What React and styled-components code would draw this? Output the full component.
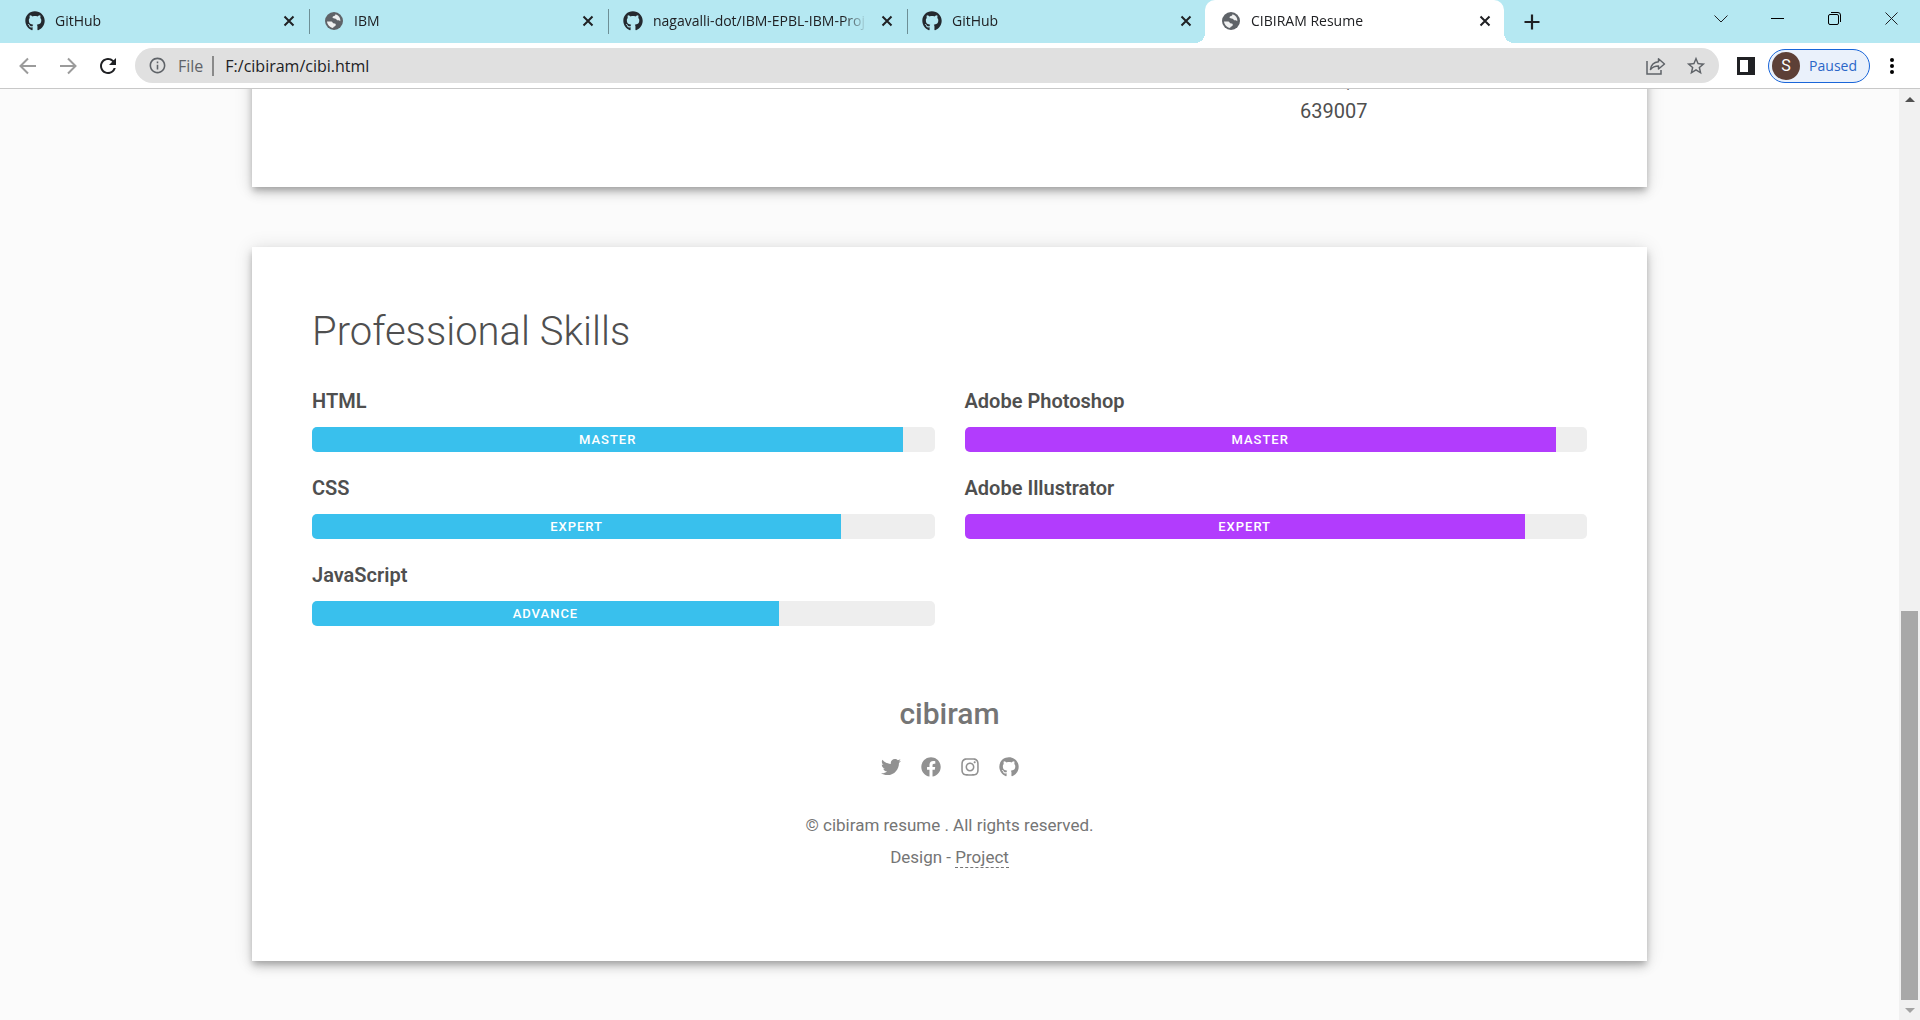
import React from 'react';
import styled, { createGlobalStyle, css } from 'styled-components';
import { FaGithub, FaTwitter, FaFacebook, FaInstagram } from 'react-icons/fa';
import { MdRefresh, MdStarBorder, MdInfoOutline } from 'react-icons/md';

const GlobalStyle = createGlobalStyle`
  *, *::before, *::after { box-sizing: border-box; }
  html, body, #root { height: 100%; }
  body { margin: 0; background: #fbfbfb; font-family: Roboto, sans-serif; }
  h1, h2, h3, p { margin: 0; }
  button { border: 0; padding: 0; background: none; color: inherit; font: inherit; }
`;

const ui = `'Open Sans', 'Noto Sans', sans-serif`;

const Window = styled.div`
  display: flex;
  flex-direction: column;
  height: 100vh;
  overflow: hidden;
`;

/* ---------- tab strip ---------- */

const TabStrip = styled.header`
  display: flex;
  flex: none;
  height: 43px;
  padding-left: 9px;
  background: #b5e8f2;
  color: #202124;
  font: 14px ${ui};
`;

const Tab = styled.div`
  position: relative;
  display: flex;
  align-items: center;
  flex: 0 1 299px;
  min-width: 0;
  gap: 10px;
  padding: 0 9px 2px 16px;

  ${(p) => p.$divided && css`
    &::before {
      content: '';
      position: absolute;
      left: 1px;
      top: 9px;
      width: 1px;
      height: 25px;
      background: #6d8f96;
    }
  `}

  ${(p) => p.$active && css`
    background: #fff;
    border-radius: 10px 10px 0 0;
    &::before, &::after {
      content: '';
      position: absolute;
      bottom: 0;
      width: 10px;
      height: 10px;
    }
    &::before {
      left: -10px;
      background: radial-gradient(circle at 0 0, transparent 10px, #fff 10px);
    }
    &::after {
      right: -10px;
      background: radial-gradient(circle at 100% 0, transparent 10px, #fff 10px);
    }
  `}
`;

const Favicon = styled.span`
  display: flex;
  flex: none;
  justify-content: center;
  width: 20px;
  font-size: 20px;
  color: ${(p) => (p.$muted ? '#5f6368' : '#24292f')};
`;

const TabTitle = styled.button`
  flex: 1;
  min-width: 0;
  overflow: hidden;
  white-space: nowrap;
  text-align: left;
  mask-image: linear-gradient(to right, #000 calc(100% - 24px), transparent);
`;

const IconButton = styled.button`
  display: flex;
  flex: none;
  align-items: center;
  justify-content: center;
  width: ${(p) => p.$w || 20}px;
  color: ${(p) => p.$color || '#202124'};
`;

const WindowControls = styled.div`
  display: flex;
  margin-left: auto;
  padding-bottom: 6px;
`;

/* ---------- toolbar ---------- */

const Toolbar = styled.div`
  display: flex;
  flex: none;
  align-items: center;
  height: 46px;
  padding: 0 13px 0 8px;
  background: #fff;
  border-bottom: 1px solid #c8c8c8;
`;

const Omnibox = styled.form`
  display: flex;
  flex: 1;
  align-items: center;
  min-width: 0;
  height: 35px;
  margin: 0 12px 0 7px;
  padding: 0 3px 0 13px;
  border-radius: 18px;
  background: #e0e0e0;
  color: #5f6368;
  font: 16px ${ui};
`;

const Scheme = styled.label`
  margin-left: 11px;
  padding-right: 9px;
  border-right: 2px solid #8a8a8a;
  line-height: 20px;
`;

const Address = styled.input`
  flex: 1;
  min-width: 0;
  padding: 0 0 0 11px;
  border: 0;
  outline: 0;
  background: none;
  color: #202124;
  font: inherit;
`;

const Profile = styled.button`
  display: flex;
  align-items: center;
  gap: 9px;
  height: 34px;
  margin: 0 7px;
  padding: 0 12px 0 3px;
  border: 1px solid #1a66d9;
  border-radius: 17px;
  background: #eaf1fb;
  color: #2a66c8;
  font: 14px ${ui};
`;

const Avatar = styled.span`
  width: 28px;
  border-radius: 50%;
  background: #5d4037;
  color: #fff;
  font: 16px/28px Roboto, sans-serif;
  text-align: center;
`;

/* ---------- page ---------- */

const Viewport = styled.div`
  display: flex;
  flex: 1;
  min-height: 0;
`;

const Page = styled.main`
  display: flex;
  flex: 1;
  flex-direction: column;
  justify-content: flex-end;
  align-items: center;
  gap: 60px;
  min-width: 0;
  padding: 0 20px 59px;
  overflow: hidden;
  background: #fbfbfb;
  color: #4f4f4f;
`;

const Card = styled.section`
  flex: none;
  width: 100%;
  max-width: 1395px;
  padding: 60px;
  background: #fff;
  box-shadow: 0 4px 6px -1px rgba(0, 0, 0, 0.2), 0 6px 10px rgba(0, 0, 0, 0.14),
    0 1px 18px rgba(0, 0, 0, 0.12);
`;

const AddressBlock = styled.address`
  width: 287px;
  margin-left: auto;
  font-style: normal;
  font-size: 20px;
  line-height: 31px;
`;

const SectionTitle = styled.h2`
  margin-bottom: 28px;
  font-size: 40px;
  font-weight: 300;
  line-height: 50px;
`;

const Columns = styled.div`
  display: grid;
  grid-template-columns: 1fr 1fr;
  gap: 30px;
`;

const SkillList = styled.div`
  display: flex;
  flex-direction: column;
  gap: 20px;
`;

const SkillName = styled.h3`
  margin-bottom: 10px;
  font-size: 20px;
  font-weight: 600;
  line-height: 32px;
`;

const Track = styled.div`
  height: 25px;
  overflow: hidden;
  border-radius: 5px;
  background: #eee;
`;

const Fill = styled.div`
  height: 100%;
  background: ${(p) => p.$color};
  color: #fff;
  font-size: 13px;
  font-weight: 500;
  letter-spacing: 1px;
  line-height: 25px;
  text-align: center;
`;

const Footer = styled.footer`
  display: flex;
  flex-direction: column;
  align-items: center;
  padding: 70px 0 28px;
  color: #757575;
  font-size: 17px;
  line-height: 32px;
`;

const Brand = styled.h2`
  font-size: 30px;
  font-weight: 500;
  line-height: 36px;
`;

const Socials = styled.nav`
  display: flex;
  gap: 20px;
  margin: 25px 0 32px;
`;

const SocialLink = styled.a`
  display: flex;
  color: #919191;
  svg { width: ${(p) => p.$w}px; height: 20px; }
`;

const ProjectLink = styled.a`
  border-bottom: 1px dashed #757575;
  color: inherit;
  text-decoration: none;
`;

/* ---------- scroll bar ---------- */

const ScrollBar = styled.div`
  display: flex;
  flex: none;
  flex-direction: column;
  width: 21px;
  background: #f1f1f1;
`;

const ScrollSpace = styled.div`
  flex: 502;
`;

const ScrollThumb = styled.div`
  flex: 389;
  margin: 0 2px;
  background: #a8a8a8;
`;

const ScrollButton = styled.button`
  display: flex;
  align-items: center;
  justify-content: center;
  height: 20px;
`;

/* ---------- drawings ---------- */

const Cross = () => (
  <svg width="12" height="12" viewBox="0 0 12 12" stroke="currentColor" strokeWidth="2">
    <path d="M1.5 1.5l9 9M10.5 1.5l-9 9" />
  </svg>
);

const Globe = () => (
  <svg width="18" height="18" viewBox="0 0 18 18">
    <circle cx="9" cy="9" r="9" fill="#5f6368" />
    <path
      d="M10.5 2.2c-.2 1-.5 1.600-1.500 1.700-.9.1-1.500.7-1.400 1.600.1.700.7.900 1.500.9 1 0 2 .2 2.400 1.100.3.700 1 .9 1.800.8.700-.1 1.200.2 2 .9C15.700 5.800 13.500 3 10.500 2.200zM2 9.500c.3 3.300 2.800 6 6.200 6.500 0-1 .4-1.300 1.200-1.600.9-.3 1.400-.9 1.400-1.700 0-.9-.6-1.300-1.600-1.300-1 0-1.500-.4-1.700-1.200-.2-.600-.6-.8-1.300-.8z"
      fill="#fff"
      fillOpacity=".9"
    />
  </svg>
);

const Arrow = ({ flip }) => (
  <svg width="18" height="18" viewBox="0 0 18 18" fill="none" stroke="#9b9b9b" strokeWidth="2" transform={flip ? 'scale(-1 1)' : undefined}>
    <path d="M17 9H2M9 1.500L1.500 9 9 16.500" />
  </svg>
);

const Share = () => (
  <svg width="20" height="18" viewBox="0 0 20 18" fill="none" stroke="#5f6368" strokeWidth="1.500">
    <path d="M1 4v13h14v-4" />
    <path d="M12.500 1.800L18.500 7l-6 5V9c-3.800 0-6 1-8 3.500C5 8.500 7.500 5.300 12.500 4.800z" strokeLinejoin="round" />
  </svg>
);

const Triangle = ({ down }) => (
  <svg width="10" height="5" viewBox="0 0 10 5">
    <path d={down ? 'M0 0h10L5 5z' : 'M0 5h10L5 0z'} fill={down ? '#a3a3a3' : '#505050'} />
  </svg>
);

const tabs = [
  { title: 'GitHub', github: true },
  { title: 'IBM' },
  { title: 'nagavalli-dot/IBM-EPBL-IBM-Proj', github: true },
  { title: 'GitHub', github: true },
  { title: 'CIBIRAM Resume', active: true },
];

const skillColumns = [
  {
    color: '#39c0ed',
    skills: [
      { name: 'HTML', level: 'MASTER', value: 95 },
      { name: 'CSS', level: 'EXPERT', value: 85 },
      { name: 'JavaScript', level: 'ADVANCE', value: 75 },
    ],
  },
  {
    color: '#b23cfd',
    skills: [
      { name: 'Adobe Photoshop', level: 'MASTER', value: 95 },
      { name: 'Adobe Illustrator', level: 'EXPERT', value: 90 },
    ],
  },
];

const socials = [
  { name: 'Twitter', Icon: FaTwitter, width: 20 },
  { name: 'Facebook', Icon: FaFacebook, width: 20 },
  { name: 'Instagram', Icon: FaInstagram, width: 18 },
  { name: 'GitHub', Icon: FaGithub, width: 20 },
];

function Skill({ name, level, value, color }) {
  return (
    <div>
      <SkillName>{name}</SkillName>
      <Track role="progressbar" aria-label={name} aria-valuenow={value} aria-valuemin={0} aria-valuemax={100}>
        <Fill $color={color} style={{ width: `${value}%` }}>{level}</Fill>
      </Track>
    </div>
  );
}

export default function App() {
  return (
    <Window>
      <GlobalStyle />
      <TabStrip>
        {tabs.map((tab, i) => (
          <Tab key={i} $active={tab.active} $divided={i > 0 && !tab.active}>
            <Favicon $muted={!tab.github}>{tab.github ? <FaGithub /> : <Globe />}</Favicon>
            <TabTitle>{tab.title}</TabTitle>
            <IconButton aria-label="Close tab"><Cross /></IconButton>
          </Tab>
        ))}
        <IconButton $w={56} aria-label="New tab">
          <svg width="16" height="16" viewBox="0 0 16 16" stroke="currentColor" strokeWidth="2.200">
            <path d="M8 .5v15M.5 8h15" />
          </svg>
        </IconButton>
        <WindowControls>
          <IconButton $w={57} aria-label="Search tabs">
            <svg width="14" height="8" viewBox="0 0 14 8" fill="none" stroke="currentColor"><path d="M.5.5L7 7 13.500.5" /></svg>
          </IconButton>
          <IconButton $w={57} aria-label="Minimize">
            <svg width="13" height="1" viewBox="0 0 13 1"><path d="M0 0h13v1H0z" /></svg>
          </IconButton>
          <IconButton $w={57} aria-label="Restore">
            <svg width="13" height="13" viewBox="0 0 13 13" fill="none" stroke="#000">
              <rect x=".5" y="2.500" width="10" height="10" rx="1.500" />
              <path d="M3 .5h7a2.500 2.500 0 0 1 2.500 2.500v7" />
            </svg>
          </IconButton>
          <IconButton $w={57} aria-label="Close">
            <svg width="13" height="13" viewBox="0 0 13 13" stroke="currentColor"><path d="M.5.5l12 12M12.500.5l-12 12" /></svg>
          </IconButton>
        </WindowControls>
      </TabStrip>

      <Toolbar>
        <IconButton $w={40} aria-label="Back"><Arrow /></IconButton>
        <IconButton $w={40} aria-label="Forward"><Arrow flip /></IconButton>
        <IconButton $w={40} aria-label="Reload"><MdRefresh size={24} /></IconButton>
        <Omnibox>
          <MdInfoOutline size={19} />
          <Scheme htmlFor="address">File</Scheme>
          <Address id="address" defaultValue="F:/cibiram/cibi.html" />
          <IconButton type="button" $w={40} aria-label="Share"><Share /></IconButton>
          <IconButton type="button" $w={40} $color="#5f6368" aria-label="Bookmark"><MdStarBorder size={22} /></IconButton>
        </Omnibox>
        <IconButton $w={30} aria-label="Side panel">
          <svg width="18" height="18" viewBox="0 0 18 18"><path d="M0 0h18v18H0zM3 3v12h8V3z" fill="#202124" fillRule="evenodd" /></svg>
        </IconButton>
        <Profile><Avatar>S</Avatar>Paused</Profile>
        <IconButton $w={30} aria-label="Menu">
          <svg width="4" height="18" viewBox="0 0 4 18"><circle cx="2" cy="3" r="2" /><circle cx="2" cy="9" r="2" /><circle cx="2" cy="15" r="2" /></svg>
        </IconButton>
      </Toolbar>

      <Viewport>
        <Page>
          <Card>
            <AddressBlock>
              Karur,
              <br />
              639007
            </AddressBlock>
          </Card>
          <Card>
            <SectionTitle>Professional Skills</SectionTitle>
            <Columns>
              {skillColumns.map((column) => (
                <SkillList key={column.color}>
                  {column.skills.map((skill) => (
                    <Skill key={skill.name} color={column.color} {...skill} />
                  ))}
                </SkillList>
              ))}
            </Columns>
            <Footer>
              <Brand>cibiram</Brand>
              <Socials>
                {socials.map(({ name, Icon, width }) => (
                  <SocialLink key={name} href="#" aria-label={name} $w={width}><Icon /></SocialLink>
                ))}
              </Socials>
              <p>© cibiram resume . All rights reserved.</p>
              <p>Design - <ProjectLink href="#">Project</ProjectLink></p>
            </Footer>
          </Card>
        </Page>
        <ScrollBar>
          <ScrollButton aria-label="Scroll up"><Triangle /></ScrollButton>
          <ScrollSpace />
          <ScrollThumb />
          <ScrollButton aria-label="Scroll down"><Triangle down /></ScrollButton>
        </ScrollBar>
      </Viewport>
    </Window>
  );
}
